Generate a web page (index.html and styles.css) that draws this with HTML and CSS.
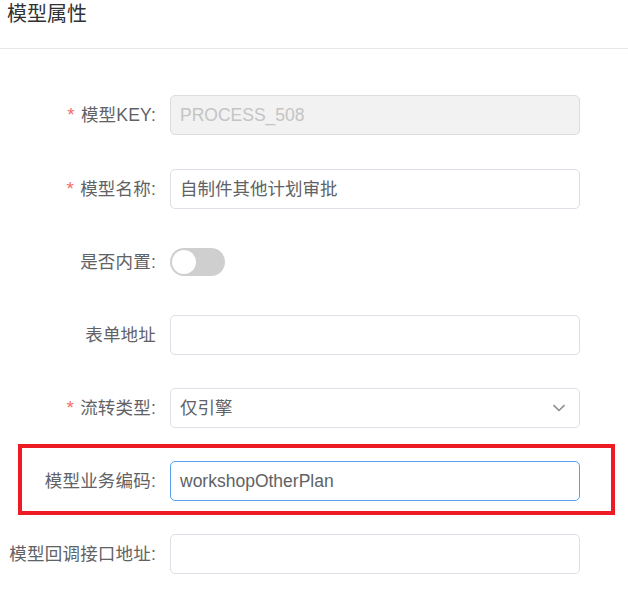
FILE: index.html
```html
<!DOCTYPE html>
<html lang="zh-CN">
<head>
<meta charset="utf-8">
<title>模型属性</title>
<link rel="stylesheet" href="styles.css">
</head>
<body>
<div class="panel">
  <div class="panel-header">模型属性</div>
  <form class="form">
    <div class="form-item">
      <label class="form-label required">模型KEY:</label>
      <div class="form-content">
        <div class="input is-disabled"><span class="input-text">PROCESS_508</span></div>
      </div>
    </div>
    <div class="form-item">
      <label class="form-label required">模型名称:</label>
      <div class="form-content">
        <div class="input"><span class="input-text">自制件其他计划审批</span></div>
      </div>
    </div>
    <div class="form-item">
      <label class="form-label">是否内置:</label>
      <div class="form-content">
        <span class="switch"><span class="switch-knob"></span></span>
      </div>
    </div>
    <div class="form-item">
      <label class="form-label">表单地址</label>
      <div class="form-content">
        <div class="input"><span class="input-text"></span></div>
      </div>
    </div>
    <div class="form-item">
      <label class="form-label required">流转类型:</label>
      <div class="form-content">
        <div class="input select"><span class="input-text">仅引擎</span>
          <svg class="select-arrow" width="14" height="8" viewBox="0 0 14 8"><path d="M1.5 1.2 L7 6.5 L12.5 1.2" fill="none" stroke="#8a8e99" stroke-width="1.6"/></svg>
        </div>
      </div>
    </div>
    <div class="form-item">
      <label class="form-label">模型业务编码:</label>
      <div class="form-content">
        <div class="input is-focus"><span class="input-text">workshopOtherPlan</span></div>
      </div>
    </div>
    <div class="form-item">
      <label class="form-label">模型回调接口地址:</label>
      <div class="form-content">
        <div class="input"><span class="input-text"></span></div>
      </div>
    </div>
  </form>
  <div class="highlight-box"></div>
</div>
</body>
</html>
```

FILE: styles.css
```css
html, body {
  margin: 0;
  padding: 0;
  background: #ffffff;
}
body {
  font-family: "Liberation Sans", "Noto Sans CJK SC", sans-serif;
  color: #606266;
}
.panel {
  position: relative;
  width: 628px;
  height: 595px;
  overflow: hidden;
}
.panel-header {
  height: 49px;
  box-sizing: border-box;
  padding: 0 0 0 7px;
  font-size: 20px;
  line-height: 28px;
  color: #303133;
  border-bottom: 1px solid #e8e8e8;
}
.form {
  display: flex;
  flex-direction: column;
  gap: 33px;
  padding-top: 46px;
  margin: 0;
}
.form-item {
  display: flex;
  align-items: center;
  height: 40px;
}
.form-item:nth-child(2) {
  margin-top: 1px;
}
.form-label {
  width: 170px;
  box-sizing: border-box;
  padding-right: 14px;
  text-align: right;
  font-size: 17.5px;
  line-height: 40px;
  letter-spacing: 0.2px;
  color: #606266;
  white-space: nowrap;
}
.form-label.required::before {
  content: "*";
  color: #f56c6c;
  font-size: 19px;
  margin-right: 6px;
}
.form-content {
  width: 410px;
  display: flex;
  align-items: center;
}
.input {
  width: 410px;
  height: 40px;
  box-sizing: border-box;
  border: 1px solid #dcdfe6;
  border-radius: 5px;
  background: #fff;
  padding: 0 9px;
  display: flex;
  align-items: center;
  font-size: 17.5px;
  color: #606266;
}
.input.is-disabled {
  background: #f2f2f2;
  border-color: #dddddd;
  color: #c4c4c4;
}
.input.is-focus {
  border-color: #5aa0ef;
}
.input-text {
  flex: 1;
  line-height: 38px;
  white-space: nowrap;
}
.select-arrow {
  margin-right: 4px;
}
.switch {
  position: relative;
  display: inline-block;
  width: 55px;
  height: 28px;
  border-radius: 14px;
  background: #cfcfcf;
}
.switch-knob {
  position: absolute;
  top: 2px;
  left: 2px;
  width: 24px;
  height: 24px;
  border-radius: 50%;
  background: #ffffff;
}
.highlight-box {
  position: absolute;
  left: 18px;
  top: 444px;
  width: 597px;
  height: 71px;
  box-sizing: border-box;
  border: 4px solid #ed1c24;
}
```
